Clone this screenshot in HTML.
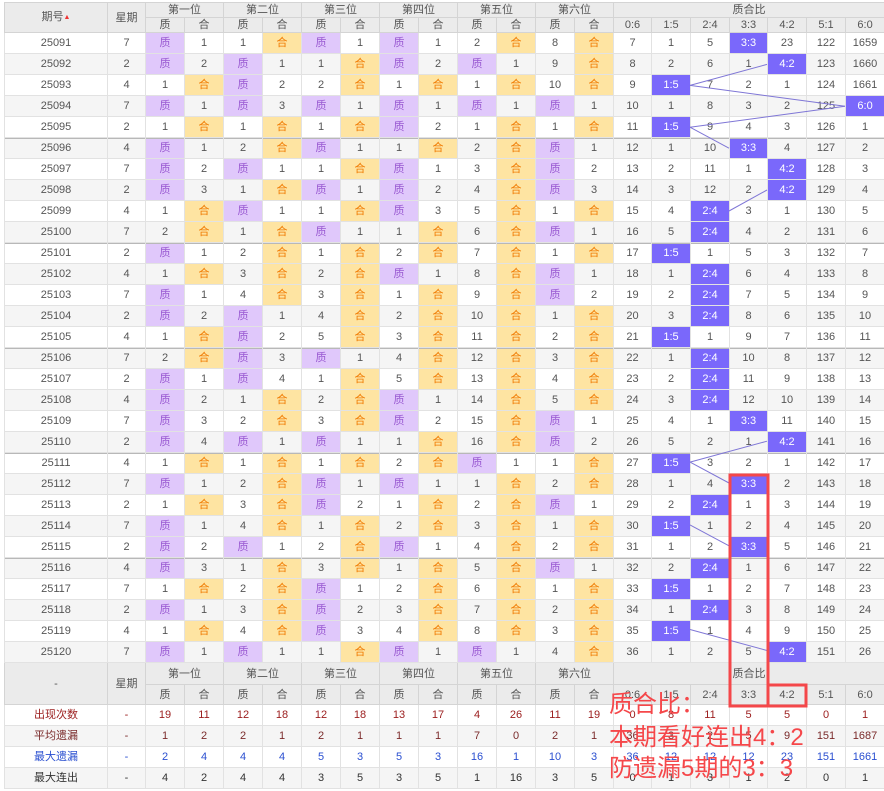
<!DOCTYPE html>
<html><head><meta charset="utf-8"><style>
*{margin:0;padding:0;box-sizing:border-box}
body{width:884px;height:791px;background:#fff;position:relative;overflow:hidden;font-family:"Liberation Sans","Noto Sans CJK SC",sans-serif;font-size:11px;color:#555}
table{position:absolute;left:4px;top:2px;border-collapse:collapse;table-layout:fixed;width:880px}
td,th{border:1px solid #e2e2e2;text-align:center;font-weight:normal;height:21px;padding:0;white-space:nowrap;overflow:hidden;line-height:12px}
thead th,.fh th{background:#ebebeb;color:#555;height:15px;border-color:#d4d4d4}
thead tr:nth-child(2) th{height:15px}
tbody.d tr:nth-child(even) td{background:#f5f5f5}
tbody.d tr.g td{box-shadow:inset 0 1px 0 #b8b8b8}
td.z{background:#e0c8fb !important;color:#9a5ad2}
td.h{background:#fee4a2 !important;color:#f07a00}
td.b{background:#7a68fb !important;color:#fff}
.fh th{height:22px}
.fh tr:nth-child(2) th{height:20px}
.st td{height:21px}
.r1 td{color:#9b1c1c}.r2 td{color:#7a2a2a}.r3 td{color:#2a4fd0}.r4 td{color:#333}
.arr{font-size:7px;color:#e33;vertical-align:1px}
</style></head><body>
<table>
<colgroup><col style="width:103px"><col style="width:38px"><col span="12" style="width:39px"><col style="width:38px"><col style="width:39px"><col style="width:39px"><col style="width:38px"><col style="width:39px"><col style="width:39px"><col style="width:39px"></colgroup>
<thead>
<tr><th rowspan="2">期号<span class="arr">▲</span></th><th rowspan="2">星期</th><th colspan="2">第一位</th><th colspan="2">第二位</th><th colspan="2">第三位</th><th colspan="2">第四位</th><th colspan="2">第五位</th><th colspan="2">第六位</th><th colspan="7">质合比</th></tr>
<tr><th>质</th><th>合</th><th>质</th><th>合</th><th>质</th><th>合</th><th>质</th><th>合</th><th>质</th><th>合</th><th>质</th><th>合</th><th>0:6</th><th>1:5</th><th>2:4</th><th>3:3</th><th>4:2</th><th>5:1</th><th>6:0</th></tr>
</thead>
<tbody class="d">
<tr><td>25091</td><td>7</td><td class=z>质</td><td>1</td><td>1</td><td class=h>合</td><td class=z>质</td><td>1</td><td class=z>质</td><td>1</td><td>2</td><td class=h>合</td><td>8</td><td class=h>合</td><td>7</td><td>1</td><td>5</td><td class=b>3:3</td><td>23</td><td>122</td><td>1659</td></tr>
<tr><td>25092</td><td>2</td><td class=z>质</td><td>2</td><td class=z>质</td><td>1</td><td>1</td><td class=h>合</td><td class=z>质</td><td>2</td><td class=z>质</td><td>1</td><td>9</td><td class=h>合</td><td>8</td><td>2</td><td>6</td><td>1</td><td class=b>4:2</td><td>123</td><td>1660</td></tr>
<tr><td>25093</td><td>4</td><td>1</td><td class=h>合</td><td class=z>质</td><td>2</td><td>2</td><td class=h>合</td><td>1</td><td class=h>合</td><td>1</td><td class=h>合</td><td>10</td><td class=h>合</td><td>9</td><td class=b>1:5</td><td>7</td><td>2</td><td>1</td><td>124</td><td>1661</td></tr>
<tr><td>25094</td><td>7</td><td class=z>质</td><td>1</td><td class=z>质</td><td>3</td><td class=z>质</td><td>1</td><td class=z>质</td><td>1</td><td class=z>质</td><td>1</td><td class=z>质</td><td>1</td><td>10</td><td>1</td><td>8</td><td>3</td><td>2</td><td>125</td><td class=b>6:0</td></tr>
<tr><td>25095</td><td>2</td><td>1</td><td class=h>合</td><td>1</td><td class=h>合</td><td>1</td><td class=h>合</td><td class=z>质</td><td>2</td><td>1</td><td class=h>合</td><td>1</td><td class=h>合</td><td>11</td><td class=b>1:5</td><td>9</td><td>4</td><td>3</td><td>126</td><td>1</td></tr>
<tr class=g><td>25096</td><td>4</td><td class=z>质</td><td>1</td><td>2</td><td class=h>合</td><td class=z>质</td><td>1</td><td>1</td><td class=h>合</td><td>2</td><td class=h>合</td><td class=z>质</td><td>1</td><td>12</td><td>1</td><td>10</td><td class=b>3:3</td><td>4</td><td>127</td><td>2</td></tr>
<tr><td>25097</td><td>7</td><td class=z>质</td><td>2</td><td class=z>质</td><td>1</td><td>1</td><td class=h>合</td><td class=z>质</td><td>1</td><td>3</td><td class=h>合</td><td class=z>质</td><td>2</td><td>13</td><td>2</td><td>11</td><td>1</td><td class=b>4:2</td><td>128</td><td>3</td></tr>
<tr><td>25098</td><td>2</td><td class=z>质</td><td>3</td><td>1</td><td class=h>合</td><td class=z>质</td><td>1</td><td class=z>质</td><td>2</td><td>4</td><td class=h>合</td><td class=z>质</td><td>3</td><td>14</td><td>3</td><td>12</td><td>2</td><td class=b>4:2</td><td>129</td><td>4</td></tr>
<tr><td>25099</td><td>4</td><td>1</td><td class=h>合</td><td class=z>质</td><td>1</td><td>1</td><td class=h>合</td><td class=z>质</td><td>3</td><td>5</td><td class=h>合</td><td>1</td><td class=h>合</td><td>15</td><td>4</td><td class=b>2:4</td><td>3</td><td>1</td><td>130</td><td>5</td></tr>
<tr><td>25100</td><td>7</td><td>2</td><td class=h>合</td><td>1</td><td class=h>合</td><td class=z>质</td><td>1</td><td>1</td><td class=h>合</td><td>6</td><td class=h>合</td><td class=z>质</td><td>1</td><td>16</td><td>5</td><td class=b>2:4</td><td>4</td><td>2</td><td>131</td><td>6</td></tr>
<tr class=g><td>25101</td><td>2</td><td class=z>质</td><td>1</td><td>2</td><td class=h>合</td><td>1</td><td class=h>合</td><td>2</td><td class=h>合</td><td>7</td><td class=h>合</td><td>1</td><td class=h>合</td><td>17</td><td class=b>1:5</td><td>1</td><td>5</td><td>3</td><td>132</td><td>7</td></tr>
<tr><td>25102</td><td>4</td><td>1</td><td class=h>合</td><td>3</td><td class=h>合</td><td>2</td><td class=h>合</td><td class=z>质</td><td>1</td><td>8</td><td class=h>合</td><td class=z>质</td><td>1</td><td>18</td><td>1</td><td class=b>2:4</td><td>6</td><td>4</td><td>133</td><td>8</td></tr>
<tr><td>25103</td><td>7</td><td class=z>质</td><td>1</td><td>4</td><td class=h>合</td><td>3</td><td class=h>合</td><td>1</td><td class=h>合</td><td>9</td><td class=h>合</td><td class=z>质</td><td>2</td><td>19</td><td>2</td><td class=b>2:4</td><td>7</td><td>5</td><td>134</td><td>9</td></tr>
<tr><td>25104</td><td>2</td><td class=z>质</td><td>2</td><td class=z>质</td><td>1</td><td>4</td><td class=h>合</td><td>2</td><td class=h>合</td><td>10</td><td class=h>合</td><td>1</td><td class=h>合</td><td>20</td><td>3</td><td class=b>2:4</td><td>8</td><td>6</td><td>135</td><td>10</td></tr>
<tr><td>25105</td><td>4</td><td>1</td><td class=h>合</td><td class=z>质</td><td>2</td><td>5</td><td class=h>合</td><td>3</td><td class=h>合</td><td>11</td><td class=h>合</td><td>2</td><td class=h>合</td><td>21</td><td class=b>1:5</td><td>1</td><td>9</td><td>7</td><td>136</td><td>11</td></tr>
<tr class=g><td>25106</td><td>7</td><td>2</td><td class=h>合</td><td class=z>质</td><td>3</td><td class=z>质</td><td>1</td><td>4</td><td class=h>合</td><td>12</td><td class=h>合</td><td>3</td><td class=h>合</td><td>22</td><td>1</td><td class=b>2:4</td><td>10</td><td>8</td><td>137</td><td>12</td></tr>
<tr><td>25107</td><td>2</td><td class=z>质</td><td>1</td><td class=z>质</td><td>4</td><td>1</td><td class=h>合</td><td>5</td><td class=h>合</td><td>13</td><td class=h>合</td><td>4</td><td class=h>合</td><td>23</td><td>2</td><td class=b>2:4</td><td>11</td><td>9</td><td>138</td><td>13</td></tr>
<tr><td>25108</td><td>4</td><td class=z>质</td><td>2</td><td>1</td><td class=h>合</td><td>2</td><td class=h>合</td><td class=z>质</td><td>1</td><td>14</td><td class=h>合</td><td>5</td><td class=h>合</td><td>24</td><td>3</td><td class=b>2:4</td><td>12</td><td>10</td><td>139</td><td>14</td></tr>
<tr><td>25109</td><td>7</td><td class=z>质</td><td>3</td><td>2</td><td class=h>合</td><td>3</td><td class=h>合</td><td class=z>质</td><td>2</td><td>15</td><td class=h>合</td><td class=z>质</td><td>1</td><td>25</td><td>4</td><td>1</td><td class=b>3:3</td><td>11</td><td>140</td><td>15</td></tr>
<tr><td>25110</td><td>2</td><td class=z>质</td><td>4</td><td class=z>质</td><td>1</td><td class=z>质</td><td>1</td><td>1</td><td class=h>合</td><td>16</td><td class=h>合</td><td class=z>质</td><td>2</td><td>26</td><td>5</td><td>2</td><td>1</td><td class=b>4:2</td><td>141</td><td>16</td></tr>
<tr class=g><td>25111</td><td>4</td><td>1</td><td class=h>合</td><td>1</td><td class=h>合</td><td>1</td><td class=h>合</td><td>2</td><td class=h>合</td><td class=z>质</td><td>1</td><td>1</td><td class=h>合</td><td>27</td><td class=b>1:5</td><td>3</td><td>2</td><td>1</td><td>142</td><td>17</td></tr>
<tr><td>25112</td><td>7</td><td class=z>质</td><td>1</td><td>2</td><td class=h>合</td><td class=z>质</td><td>1</td><td class=z>质</td><td>1</td><td>1</td><td class=h>合</td><td>2</td><td class=h>合</td><td>28</td><td>1</td><td>4</td><td class=b>3:3</td><td>2</td><td>143</td><td>18</td></tr>
<tr><td>25113</td><td>2</td><td>1</td><td class=h>合</td><td>3</td><td class=h>合</td><td class=z>质</td><td>2</td><td>1</td><td class=h>合</td><td>2</td><td class=h>合</td><td class=z>质</td><td>1</td><td>29</td><td>2</td><td class=b>2:4</td><td>1</td><td>3</td><td>144</td><td>19</td></tr>
<tr><td>25114</td><td>7</td><td class=z>质</td><td>1</td><td>4</td><td class=h>合</td><td>1</td><td class=h>合</td><td>2</td><td class=h>合</td><td>3</td><td class=h>合</td><td>1</td><td class=h>合</td><td>30</td><td class=b>1:5</td><td>1</td><td>2</td><td>4</td><td>145</td><td>20</td></tr>
<tr><td>25115</td><td>2</td><td class=z>质</td><td>2</td><td class=z>质</td><td>1</td><td>2</td><td class=h>合</td><td class=z>质</td><td>1</td><td>4</td><td class=h>合</td><td>2</td><td class=h>合</td><td>31</td><td>1</td><td>2</td><td class=b>3:3</td><td>5</td><td>146</td><td>21</td></tr>
<tr class=g><td>25116</td><td>4</td><td class=z>质</td><td>3</td><td>1</td><td class=h>合</td><td>3</td><td class=h>合</td><td>1</td><td class=h>合</td><td>5</td><td class=h>合</td><td class=z>质</td><td>1</td><td>32</td><td>2</td><td class=b>2:4</td><td>1</td><td>6</td><td>147</td><td>22</td></tr>
<tr><td>25117</td><td>7</td><td>1</td><td class=h>合</td><td>2</td><td class=h>合</td><td class=z>质</td><td>1</td><td>2</td><td class=h>合</td><td>6</td><td class=h>合</td><td>1</td><td class=h>合</td><td>33</td><td class=b>1:5</td><td>1</td><td>2</td><td>7</td><td>148</td><td>23</td></tr>
<tr><td>25118</td><td>2</td><td class=z>质</td><td>1</td><td>3</td><td class=h>合</td><td class=z>质</td><td>2</td><td>3</td><td class=h>合</td><td>7</td><td class=h>合</td><td>2</td><td class=h>合</td><td>34</td><td>1</td><td class=b>2:4</td><td>3</td><td>8</td><td>149</td><td>24</td></tr>
<tr><td>25119</td><td>4</td><td>1</td><td class=h>合</td><td>4</td><td class=h>合</td><td class=z>质</td><td>3</td><td>4</td><td class=h>合</td><td>8</td><td class=h>合</td><td>3</td><td class=h>合</td><td>35</td><td class=b>1:5</td><td>1</td><td>4</td><td>9</td><td>150</td><td>25</td></tr>
<tr><td>25120</td><td>7</td><td class=z>质</td><td>1</td><td class=z>质</td><td>1</td><td>1</td><td class=h>合</td><td class=z>质</td><td>1</td><td class=z>质</td><td>1</td><td>4</td><td class=h>合</td><td>36</td><td>1</td><td>2</td><td>5</td><td class=b>4:2</td><td>151</td><td>26</td></tr>
</tbody>
<tbody class="fh">
<tr><th rowspan="2">-</th><th rowspan="2">星期</th><th colspan="2">第一位</th><th colspan="2">第二位</th><th colspan="2">第三位</th><th colspan="2">第四位</th><th colspan="2">第五位</th><th colspan="2">第六位</th><th colspan="7">质合比</th></tr>
<tr><th>质</th><th>合</th><th>质</th><th>合</th><th>质</th><th>合</th><th>质</th><th>合</th><th>质</th><th>合</th><th>质</th><th>合</th><th>0:6</th><th>1:5</th><th>2:4</th><th>3:3</th><th>4:2</th><th>5:1</th><th>6:0</th></tr>
</tbody>
<tbody class="st">
<tr class=r1><td>出现次数</td><td>-</td><td>19</td><td>11</td><td>12</td><td>18</td><td>12</td><td>18</td><td>13</td><td>17</td><td>4</td><td>26</td><td>11</td><td>19</td><td>0</td><td>8</td><td>11</td><td>5</td><td>5</td><td>0</td><td>1</td></tr>
<tr class=r2 style="background:#f5f5f5"><td>平均遗漏</td><td>-</td><td>1</td><td>2</td><td>2</td><td>1</td><td>2</td><td>1</td><td>1</td><td>1</td><td>7</td><td>0</td><td>2</td><td>1</td><td>36</td><td>3</td><td>2</td><td>5</td><td>9</td><td>151</td><td>1687</td></tr>
<tr class=r3><td>最大遗漏</td><td>-</td><td>2</td><td>4</td><td>4</td><td>4</td><td>5</td><td>3</td><td>5</td><td>3</td><td>16</td><td>1</td><td>10</td><td>3</td><td>36</td><td>12</td><td>12</td><td>12</td><td>23</td><td>151</td><td>1661</td></tr>
<tr class=r4 style="background:#f5f5f5"><td>最大连出</td><td>-</td><td>4</td><td>2</td><td>4</td><td>4</td><td>3</td><td>5</td><td>3</td><td>5</td><td>1</td><td>16</td><td>3</td><td>5</td><td>0</td><td>1</td><td>3</td><td>1</td><td>2</td><td>0</td><td>1</td></tr>
</tbody>
</table>
<svg width="884" height="791" style="position:absolute;left:0;top:0" xmlns="http://www.w3.org/2000/svg">
<g stroke="#7f76d6" stroke-width="1" fill="none">
<line x1="767" y1="64.4" x2="690" y2="85.4"/>
<line x1="690" y1="85.4" x2="845" y2="106.3"/>
<line x1="845" y1="106.3" x2="690" y2="127.2"/>
<line x1="690" y1="127.2" x2="729" y2="148.2"/>
<line x1="767" y1="190" x2="729" y2="211"/>
<line x1="767" y1="441.2" x2="690" y2="462.1"/>
<line x1="690" y1="462.1" x2="729" y2="483"/>
<line x1="690" y1="524.9" x2="729" y2="545.8"/>
<line x1="690" y1="629.5" x2="767" y2="650.5"/>
</g>
<g stroke="#f4474a" stroke-width="3" fill="none">
<rect x="730" y="475" width="38" height="231"/>
<rect x="768" y="685" width="38" height="21"/>
</g>
<g fill="#f5474a" font-family="Liberation Sans, Noto Sans CJK SC, sans-serif" font-size="24">
<text x="609" y="712">质合比：</text>
<text x="609" y="745">本期看好连出4：2</text>
<text x="609" y="776">防遗漏5期的3：3</text>
</g>
</svg>
</body></html>
